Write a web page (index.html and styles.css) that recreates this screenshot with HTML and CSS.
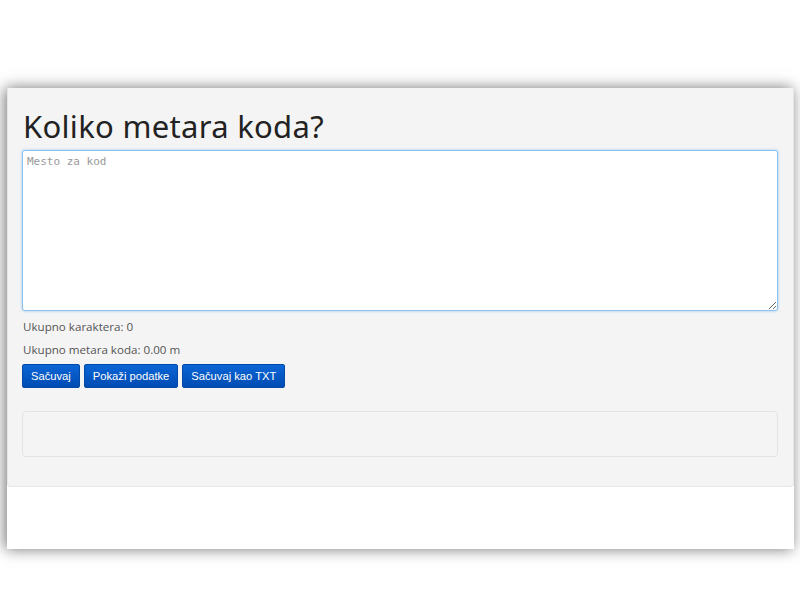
FILE: index.html
```html
<!DOCTYPE html>
<html lang="sr">
<head>
<meta charset="utf-8">
<title>Koliko metara koda?</title>
<link rel="stylesheet" href="styles.css">
</head>
<body>
<div class="window">
  <div class="panel">
    <h1 class="title">Koliko metara koda?</h1>
    <textarea class="code" placeholder="Mesto za kod"></textarea>
    <p class="stat">Ukupno karaktera: 0</p>
    <p class="stat">Ukupno metara koda: 0.00 m</p>
    <div class="actions">
      <button class="btn">Sačuvaj</button>
      <button class="btn">Pokaži podatke</button>
      <button class="btn">Sačuvaj kao TXT</button>
    </div>
    <div class="well"></div>
  </div>
</div>
</body>
</html>
```

FILE: styles.css
```css
html, body {
  margin: 0;
  padding: 0;
  background: #ffffff;
}
body {
  padding: 88px 6px 0 7px;
  height: 601px;
  box-sizing: border-box;
  overflow: hidden;
  font-family: "Open Sans", "Noto Sans", sans-serif;
}
.window {
  height: 461px;
  background: #ffffff;
  box-shadow: -2px 0 14px rgba(0, 0, 0, 0.55);
}
.panel {
  background: #f4f4f4;
  border: 1px solid #e6e6e6;
  border-top: none;
  border-radius: 0 0 4px 4px;
  padding: 20px 15px 29px 14px;
  height: 399px;
  box-sizing: border-box;
}
.title {
  margin: 0 0 6px 1px;
  font-family: "Noto Sans", sans-serif;
  font-weight: 400;
  font-size: 31px;
  line-height: 36px;
  letter-spacing: 0.3px;
  color: #222222;
}
.code {
  display: block;
  width: 100%;
  height: 161px;
  box-sizing: border-box;
  margin: 0;
  padding: 4px 4px;
  border: 1px solid #8cc2ef;
  border-radius: 3px;
  box-shadow: 0 0 3px rgba(102, 175, 233, 0.6);
  background: #ffffff;
  font-family: "DejaVu Sans Mono", monospace;
  font-size: 11px;
  line-height: 14px;
  color: #333;
  resize: vertical;
  outline: none;
}
.code::placeholder {
  color: #9a9a9a;
}
.stat {
  margin: 0;
  padding-left: 1px;
  font-size: 11.6px;
  line-height: 23px;
  color: #555555;
}
.stat:first-of-type {
  margin-top: 4px;
}
.actions {
  display: flex;
  gap: 4px;
  margin-top: 3px;
}
.btn {
  height: 24px;
  padding: 0 8px;
  border: 1px solid #0448a8;
  border-radius: 2px;
  background: linear-gradient(#0b66d6, #004bb3);
  color: #ffffff;
  font-family: "Liberation Sans", Arial, sans-serif;
  font-size: 11.2px;
  line-height: 22px;
  cursor: pointer;
}
.well {
  margin-top: 23px;
  height: 46px;
  box-sizing: border-box;
  border: 1px solid #e3e3e3;
  border-radius: 4px;
  background: #f4f4f4;
}
```
